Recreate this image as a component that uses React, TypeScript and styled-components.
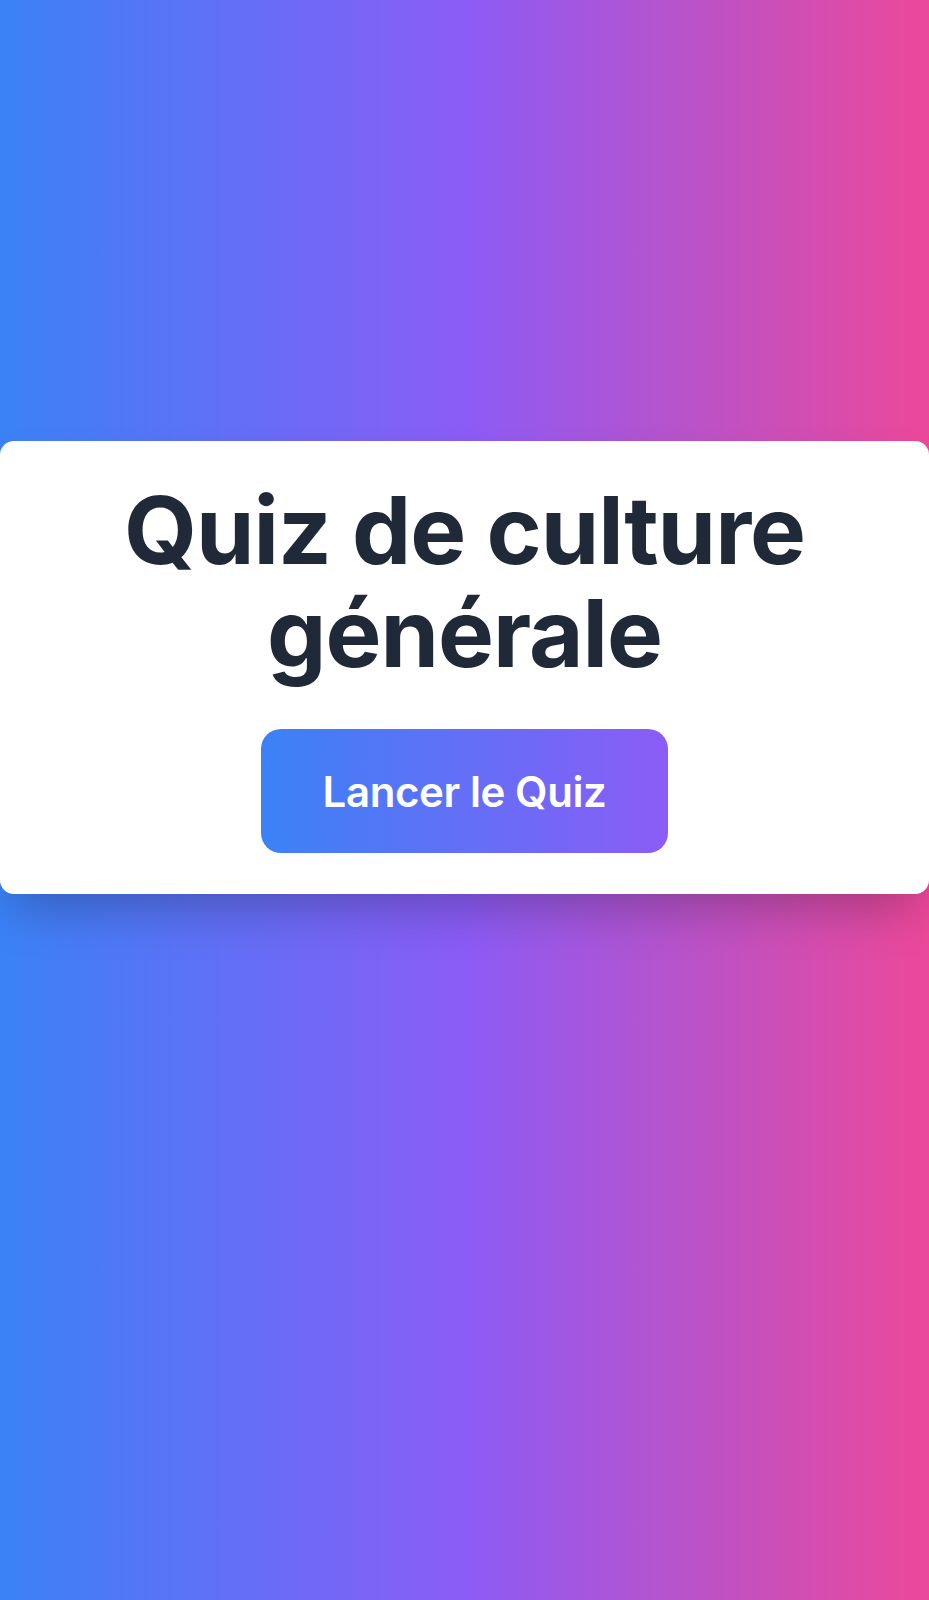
import styled, { createGlobalStyle } from "styled-components";

const GlobalStyle = createGlobalStyle`
  html, body {
    margin: 0;
    padding: 0;
  }
  body {
    font-family: Inter, "Noto Sans", "Liberation Sans", sans-serif;
  }
  * {
    box-sizing: border-box;
  }
`;

const Page = styled.div`
  min-height: 1600px;
  padding-top: 441px;
  display: flex;
  flex-direction: column;
  align-items: stretch;
  background: linear-gradient(to right, #3b82f6 0%, #8b5cf6 50%, #ec4899 100%);
`;

const Card = styled.div`
  background-color: #ffffff;
  border-radius: 14px;
  padding: 38px 24px 41px;
  display: flex;
  flex-direction: column;
  align-items: center;
  box-shadow: 0 25px 50px -12px rgba(0, 0, 0, 0.25);
`;

const Title = styled.h1`
  margin: 0 0 44px;
  font-size: 94px;
  line-height: 103px;
  font-weight: 700;
  letter-spacing: -1px;
  color: #1f2937;
  text-align: center;
`;

const TitleLine = styled.span`
  display: block;
`;

const StartButton = styled.button`
  width: 407px;
  height: 124px;
  border: none;
  border-radius: 20px;
  cursor: pointer;
  font-family: inherit;
  font-size: 42px;
  font-weight: 600;
  letter-spacing: -0.4px;
  color: #ffffff;
  background: linear-gradient(to right, #3b82f6, #8b5cf6);
`;

export default function App() {
  return (
    <>
      <GlobalStyle />
      <Page>
        <Card>
          <Title>
            <TitleLine>Quiz de culture</TitleLine>
            <TitleLine>générale</TitleLine>
          </Title>
          <StartButton>Lancer le Quiz</StartButton>
        </Card>
      </Page>
    </>
  );
}
